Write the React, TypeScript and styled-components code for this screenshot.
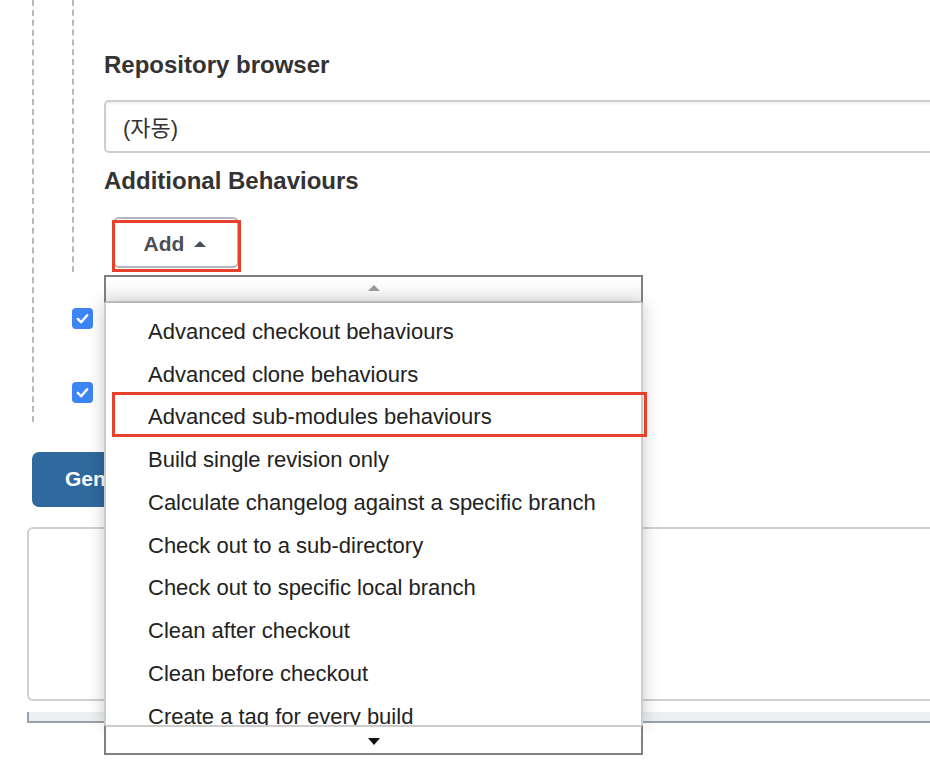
import styled, { createGlobalStyle } from "styled-components";

const GlobalStyle = createGlobalStyle`
  html, body {
    margin: 0;
    padding: 0;
    background: #fff;
    overflow: hidden;
  }
  body {
    font-family: "Liberation Sans", Arial, "Noto Sans CJK KR", sans-serif;
    color: #333;
  }
`

const Page = styled.div`
  width: 1200px;
  height: 762px;
  display: flex;
  flex-direction: column;
`

const OuterSection = styled.div`
  margin-left: 32px;
  border-left: 2px dashed #b9b9b9;
  padding-bottom: 19px;
  display: flex;
  flex-direction: column;
`

const InnerSection = styled.div`
  margin-left: 38px;
  border-left: 2px dashed #b9b9b9;
  padding: 51px 0 4px 30px;
  display: flex;
  flex-direction: column;
`

const Label = styled.div`
  font-size: 24px;
  font-weight: bold;
  line-height: 28.8px;
  color: #333;
`

const Select = styled.div`
  margin: 20px 0 14px;
  height: 53px;
  box-sizing: border-box;
  border: 2px solid #cdcdcd;
  border-radius: 5px;
  box-shadow: inset 0 2px 3px rgba(0, 0, 0, 0.05);
  display: flex;
  align-items: center;
  padding-left: 17px;
  font-size: 22px;
  color: #333;
`

const AddArea = styled.div`
  position: relative;
  margin: 21px 0 0 9px;
  align-self: flex-start;
`

const AddButton = styled.button`
  width: 126px;
  height: 51px;
  box-sizing: border-box;
  border: 2px solid #b3b8bd;
  border-radius: 6px;
  background: #fff;
  display: flex;
  align-items: center;
  justify-content: center;
  gap: 10px;
  font-family: inherit;
  font-size: 21px;
  font-weight: bold;
  color: #4b5058;
  padding: 4px 2px 0 0;
`

const Caret = styled.span<{ $down?: boolean; $color: string }>`
  width: 0;
  height: 0;
  border-left: 6px solid transparent;
  border-right: 6px solid transparent;
  ${(p) => (p.$down ? `border-top: 7px solid ${p.$color};` : `border-bottom: 6px solid ${p.$color};`)}
`

const AddMark = styled.div`
  position: absolute;
  left: -1px;
  top: 3px;
  width: 129px;
  height: 52px;
  box-sizing: border-box;
  border: 3px solid #e8412b;
  pointer-events: none;
`

const Menu = styled.div`
  position: absolute;
  left: -9px;
  top: 58px;
  width: 539px;
  z-index: 10;
  display: flex;
  flex-direction: column;
`

const ScrollUp = styled.div`
  height: 28px;
  box-sizing: border-box;
  border: 2px solid #808080;
  border-bottom: 2px solid #cccccc;
  background: linear-gradient(#ffffff, #f4f4f4);
  display: flex;
  align-items: center;
  justify-content: center;
  padding-bottom: 2px;
`

const List = styled.ul`
  list-style: none;
  margin: 0;
  height: 422px;
  box-sizing: border-box;
  padding: 8px 0 0;
  background: #fff;
  border-left: 2px solid #cccccc;
  border-right: 2px solid #cccccc;
  box-shadow: 0 0 16px rgba(0, 0, 0, 0.22);
  overflow-y: clip;
  overflow-x: visible;
`

const Item = styled.li<{ $marked?: boolean }>`
  position: relative;
  height: 42.75px;
  display: flex;
  align-items: center;
  padding-left: 42px;
  font-size: 22px;
  color: #222;
  white-space: nowrap;

  ${(p) =>
    p.$marked &&
    `
    &::after {
      content: "";
      position: absolute;
      left: 6px;
      right: -6px;
      top: -4.5px;
      height: 45px;
      box-sizing: border-box;
      border: 3px solid #e8412b;
    }
  `}
`

const ScrollDown = styled.div`
  height: 30px;
  box-sizing: border-box;
  border: 2px solid #808080;
  border-top: 2px solid #cccccc;
  background: #fff;
  display: flex;
  align-items: center;
  justify-content: center;
  padding-top: 3px;
`

const CheckList = styled.div`
  display: flex;
  flex-direction: column;
  gap: 53px;
  padding: 36px 0 0 38px;
`

const CheckRow = styled.div`
  display: flex;
  align-items: center;
  height: 21px;
`

const Box = styled.span`
  width: 21px;
  height: 21px;
  border-radius: 4px;
  background: #3d85f4;
  display: flex;
  align-items: center;
  justify-content: center;
`

const GenerateButton = styled.button`
  margin: 30px 0 0 32px;
  align-self: flex-start;
  height: 55px;
  border: none;
  border-radius: 7px;
  background: #2f699d;
  color: #fff;
  font-family: inherit;
  font-size: 21px;
  font-weight: bold;
  padding: 0 33px;
`

const Output = styled.div`
  margin: 20px 0 0 27px;
  height: 174px;
  box-sizing: border-box;
  border: 2px solid #d0d0d0;
  border-radius: 6px;
`

const ResizeBar = styled.div`
  margin: 11px 0 0 27px;
  height: 9px;
  background: #eceff1;
  border-left: 2px solid #9aa3ab;
  border-bottom: 2px solid #9aa3ab;
`

const behaviours = [
  "Advanced checkout behaviours",
  "Advanced clone behaviours",
  "Advanced sub-modules behaviours",
  "Build single revision only",
  "Calculate changelog against a specific branch",
  "Check out to a sub-directory",
  "Check out to specific local branch",
  "Clean after checkout",
  "Clean before checkout",
  "Create a tag for every build",
]

function Check({ label }: { label: string }) {
  return (
    <Box role="checkbox" aria-checked="true" aria-label={label}>
      <svg width="15" height="15" viewBox="0 0 16 16">
        <path d="M3 8.5 L6.5 12 L13 4.5" fill="none" stroke="#fff" strokeWidth="2.6" strokeLinecap="round" strokeLinejoin="round" />
      </svg>
    </Box>
  )
}

function App() {
  return (
    <Page>
      <GlobalStyle />
      <OuterSection>
        <InnerSection>
          <Label>Repository browser</Label>
          <Select>(자동)</Select>
          <Label>Additional Behaviours</Label>
          <AddArea>
            <AddButton>
              Add
              <Caret $color="#4b5058" />
            </AddButton>
            <AddMark />
            <Menu>
              <ScrollUp>
                <Caret $color="#9a9a9a" />
              </ScrollUp>
              <List>
                {behaviours.map((b) => (
                  <Item key={b} $marked={b === "Advanced sub-modules behaviours"}>
                    {b}
                  </Item>
                ))}
              </List>
              <ScrollDown>
                <Caret $down $color="#111" />
              </ScrollDown>
            </Menu>
          </AddArea>
        </InnerSection>
        <CheckList>
          <CheckRow>
            <Check label="Include in polling?" />
          </CheckRow>
          <CheckRow>
            <Check label="Include in changelog?" />
          </CheckRow>
        </CheckList>
      </OuterSection>
      <GenerateButton>Generate Pipeline Script</GenerateButton>
      <Output />
      <ResizeBar />
    </Page>
  )
}

export default App
